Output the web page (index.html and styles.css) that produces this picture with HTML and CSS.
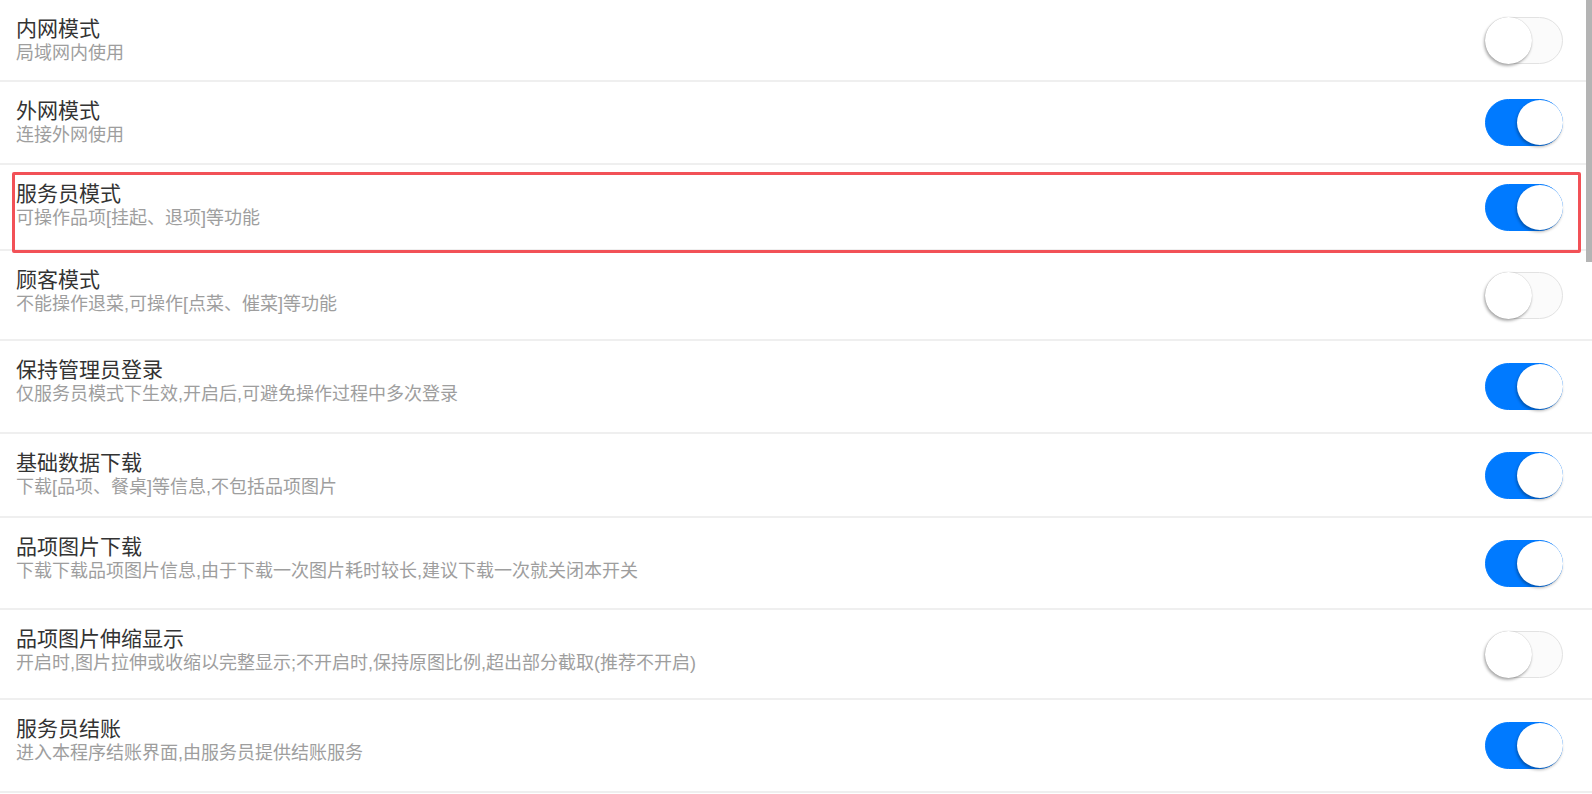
FILE: index.html
```html
<!DOCTYPE html>
<html lang="zh-CN">
<head>
<meta charset="utf-8">
<title>设置</title>
<link rel="stylesheet" href="styles.css">
</head>
<body>
<div class="page">
  <ul class="list">
    <li class="row">
      <div class="text"><div class="title">内网模式</div><div class="desc">局域网内使用</div></div>
      <span class="switch"><span class="knob"></span></span>
    </li>
    <li class="row">
      <div class="text"><div class="title">外网模式</div><div class="desc">连接外网使用</div></div>
      <span class="switch on"><span class="knob"></span></span>
    </li>
    <li class="row">
      <div class="text"><div class="title">服务员模式</div><div class="desc">可操作品项[挂起、退项]等功能</div></div>
      <span class="switch on"><span class="knob"></span></span>
    </li>
    <li class="row">
      <div class="text"><div class="title">顾客模式</div><div class="desc">不能操作退菜,可操作[点菜、催菜]等功能</div></div>
      <span class="switch"><span class="knob"></span></span>
    </li>
    <li class="row">
      <div class="text"><div class="title">保持管理员登录</div><div class="desc">仅服务员模式下生效,开启后,可避免操作过程中多次登录</div></div>
      <span class="switch on"><span class="knob"></span></span>
    </li>
    <li class="row">
      <div class="text"><div class="title">基础数据下载</div><div class="desc">下载[品项、餐桌]等信息,不包括品项图片</div></div>
      <span class="switch on"><span class="knob"></span></span>
    </li>
    <li class="row">
      <div class="text"><div class="title">品项图片下载</div><div class="desc">下载下载品项图片信息,由于下载一次图片耗时较长,建议下载一次就关闭本开关</div></div>
      <span class="switch on"><span class="knob"></span></span>
    </li>
    <li class="row">
      <div class="text"><div class="title">品项图片伸缩显示</div><div class="desc">开启时,图片拉伸或收缩以完整显示;不开启时,保持原图比例,超出部分截取(推荐不开启)</div></div>
      <span class="switch"><span class="knob"></span></span>
    </li>
    <li class="row">
      <div class="text"><div class="title">服务员结账</div><div class="desc">进入本程序结账界面,由服务员提供结账服务</div></div>
      <span class="switch on"><span class="knob"></span></span>
    </li>
  </ul>
  <div class="highlight"></div>
  <div class="scrollbar"></div>
</div>
</body>
</html>
```
FILE: styles.css
```css
html, body {
  margin: 0;
  padding: 0;
  background: #ffffff;
  overflow: hidden;
}
.page {
  position: relative;
  width: 1592px;
  height: 794px;
  overflow: hidden;
  font-family: "Liberation Sans", "Noto Sans CJK SC", sans-serif;
}
.list {
  list-style: none;
  margin: 0;
  padding: 0;
}
.row {
  display: flex;
  align-items: flex-start;
  justify-content: space-between;
  box-sizing: content-box;
  padding: 16px 29px 0 16px;
  border-bottom: 2px solid #efefef;
}
.row:nth-child(1) { height: 64px; }
.row:nth-child(2) { height: 65px; }
.row:nth-child(3) { height: 68px; }
.row:nth-child(4) { height: 72px; }
.row:nth-child(5) { height: 75px; }
.row:nth-child(6) { height: 66px; }
.row:nth-child(7) { height: 74px; }
.row:nth-child(8) { height: 72px; }
.row:nth-child(9) { height: 75px; }
.text {
  display: flex;
  flex-direction: column;
}
.title {
  font-size: 21px;
  line-height: 26px;
  color: #333333;
}
.desc {
  font-size: 18px;
  line-height: 22px;
  color: #9e9e9e;
}
.switch {
  position: relative;
  align-self: center;
  margin-top: -16px;
  width: 78px;
  height: 47px;
  box-sizing: border-box;
  border-radius: 24px;
  background: #fbfbfb;
  border: 1px solid #e2e2e2;
}
.switch .knob {
  position: absolute;
  left: -1px;
  top: -1px;
  width: 47px;
  height: 47px;
  border-radius: 50%;
  background: #ffffff;
  box-shadow: -1px 2px 3px rgba(0, 0, 0, 0.32), 0 0 1px rgba(0, 0, 0, 0.25);
}
.switch.on {
  background: #007aff;
  border-color: #007aff;
}
.switch.on .knob {
  left: auto;
  right: -1px;
  width: 46px;
  height: 45px;
  top: 0;
  box-shadow: -1px 2px 3px rgba(0, 0, 0, 0.3);
}
.highlight {
  position: absolute;
  left: 12px;
  top: 172px;
  width: 1563px;
  height: 75px;
  border: 3px solid #f25157;
  border-radius: 2px;
}
.scrollbar {
  position: absolute;
  right: 0;
  top: 0;
  width: 6px;
  height: 262px;
  background: #b4b4b4;
}
```
